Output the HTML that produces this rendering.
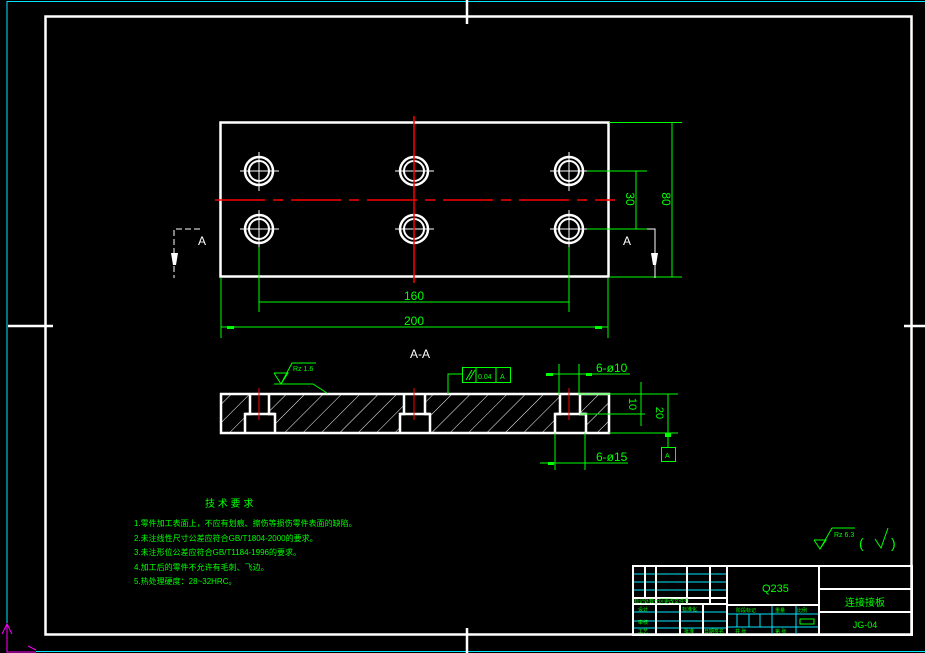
<!DOCTYPE html>
<html><head><meta charset="utf-8"><style>
html,body{margin:0;padding:0;background:#000;width:925px;height:653px;overflow:hidden}
svg{display:block}
text{font-family:"Liberation Sans","Noto Sans CJK SC",sans-serif}
</style></head><body>
<svg width="925" height="653" viewBox="0 0 925 653" xmlns="http://www.w3.org/2000/svg">
<defs>
<pattern id="h" patternUnits="userSpaceOnUse" width="13" height="13" patternTransform="rotate(45)">
<line x1="0" y1="0" x2="0" y2="13" stroke="#fff" stroke-width="1"/>
</pattern>
</defs>
<!-- outer cyan -->
<polyline points="7,623 7,1.5 925,1.5" fill="none" stroke="#00e5ff" stroke-width="1"/>
<line x1="36" y1="651.5" x2="925" y2="651.5" stroke="#00e5ff" stroke-width="1"/>
<!-- magenta UCS -->
<g stroke="#ff00ff" fill="none" stroke-width="1">
<polyline points="7,624 7,652 36,652"/><polyline points="2,634 7,624 12,634"/><polyline points="28,646 36,650"/>
</g>
<!-- inner frame -->
<rect x="45.5" y="16.5" width="866" height="618" fill="none" stroke="#fff" stroke-width="2.5"/>
<g stroke="#fff" stroke-width="2.5">
<line x1="467" y1="0" x2="467" y2="24"/><line x1="467" y1="628" x2="467" y2="653"/>
<line x1="8" y1="326" x2="53" y2="326"/><line x1="904" y1="326" x2="925" y2="326"/>
</g>
<!-- top view -->
<rect x="220.5" y="122.5" width="388" height="154" fill="none" stroke="#fff" stroke-width="2.5"/>
<g stroke="#fff" fill="none">
<g id="hl">
<circle cx="259" cy="171" r="14" stroke-width="2.5"/><circle cx="259" cy="171" r="10" stroke-width="2"/>
<line x1="240" y1="171" x2="279" y2="171" stroke-width="1"/><line x1="259" y1="152" x2="259" y2="191" stroke-width="1"/>
</g>
<use href="#hl" x="155"/><use href="#hl" x="310"/>
<use href="#hl" y="58"/><use href="#hl" x="155" y="58"/><use href="#hl" x="310" y="58"/>
</g>
<line x1="215" y1="200" x2="615" y2="200" stroke="#f00" stroke-width="1.5" stroke-dasharray="50,8,10,8"/>
<line x1="414" y1="116" x2="414" y2="283" stroke="#f00" stroke-width="1.5"/>
<!-- dims top -->
<g stroke="#00ff00" stroke-width="1" fill="none">
<line x1="259" y1="247" x2="259" y2="312"/><line x1="569" y1="247" x2="569" y2="312"/>
<line x1="259" y1="302" x2="569" y2="302"/>
<line x1="221" y1="278" x2="221" y2="338"/><line x1="608" y1="278" x2="608" y2="338"/>
<line x1="221" y1="327" x2="608" y2="327"/>
<line x1="609" y1="122.5" x2="682" y2="122.5"/><line x1="609" y1="277" x2="682" y2="277"/>
<line x1="672" y1="122" x2="672" y2="277"/>
<line x1="587" y1="171" x2="647" y2="171"/><line x1="587" y1="229" x2="647" y2="229"/>
<line x1="636" y1="171" x2="636" y2="229"/>
</g>
<g fill="#00ff00"><rect x="227" y="326" width="7" height="3"/><rect x="595" y="326" width="7" height="3"/></g>
<g fill="#00ff00" font-size="12" text-anchor="middle">
<text x="414" y="300">160</text><text x="414" y="325">200</text>
<text transform="translate(626,199) rotate(90)">30</text>
<text transform="translate(662,199) rotate(90)">80</text>
</g>
<!-- section arrows -->
<g stroke="#fff" stroke-width="1" fill="none">
<polyline points="200,229 174,229 174,278" stroke-dasharray="6,3"/>
<polyline points="647,229 655,229 655,278"/>
</g>
<g fill="#fff"><polygon points="171,253 178,253 176,265 173,265"/><polygon points="651,253 658,253 656,265 653,265"/></g>
<g fill="#fff" font-size="12" text-anchor="middle"><text x="202" y="245">A</text><text x="627" y="245">A</text>
<text x="420" y="358">A-A</text></g>
<!-- section -->
<path d="M221,394 H609 V433 H221 Z M250,394 V414 H245 V433 H275 V414 H269 V394 Z M404,394 V414 H400 V433 H430 V414 H425 V394 Z M560,394 V414 H555 V433 H586 V414 H580 V394 Z" fill="url(#h)" fill-rule="evenodd"/>
<path d="M221,394 H609 V433 H221 Z" fill="none" stroke="#fff" stroke-width="2.5"/>
<g fill="none" stroke="#fff" stroke-width="2.5">
<path d="M250,394 V414 H245 V433 M275,433 V414 H269 V394"/>
<path d="M404,394 V414 H400 V433 M430,433 V414 H425 V394"/>
<path d="M560,394 V414 H555 V433 M586,433 V414 H580 V394"/>
<line x1="245" y1="414" x2="275" y2="414"/><line x1="400" y1="414" x2="430" y2="414"/><line x1="555" y1="414" x2="586" y2="414"/>
</g>
<g stroke="#f00" stroke-width="1"><line x1="259" y1="388" x2="259" y2="420"/><line x1="414" y1="388" x2="414" y2="420"/><line x1="569" y1="388" x2="569" y2="420"/></g>
<!-- section annotations -->
<g stroke="#00ff00" stroke-width="1" fill="none">
<polyline points="274,373 288,373 281,384 274,373"/><polyline points="281,384 292,363 316,363"/>
<polyline points="274,384 313,384 327,393"/>
<rect x="462.5" y="367.5" width="48" height="15"/><line x1="476" y1="367" x2="476" y2="382"/><line x1="496" y1="367" x2="496" y2="382"/>
<polyline points="462,374 448,374 448,394"/>
<line x1="466" y1="380" x2="472" y2="370"/><line x1="469" y1="380" x2="475" y2="370"/>
<line x1="546" y1="374" x2="630" y2="374"/><line x1="559" y1="364" x2="559" y2="395"/><line x1="579" y1="364" x2="579" y2="395"/>
<line x1="580" y1="394" x2="678" y2="394"/><line x1="580" y1="414" x2="645" y2="414"/><line x1="609" y1="433" x2="678" y2="433"/>
<line x1="641" y1="382" x2="641" y2="426"/><line x1="668" y1="394" x2="668" y2="447"/>
<line x1="540" y1="463" x2="628" y2="463"/><line x1="555" y1="433" x2="555" y2="470"/><line x1="585" y1="433" x2="585" y2="470"/>
<rect x="661.5" y="447.5" width="14" height="14"/>
</g>
<g fill="#00ff00"><rect x="546" y="373" width="7" height="3"/><rect x="586" y="373" width="6" height="3"/><rect x="665" y="433" width="6" height="4"/><rect x="548" y="462" width="6" height="3"/></g>
<g fill="#00ff00">
<text x="293" y="371" font-size="7">Rz 1.6</text>
<text x="478" y="379" font-size="7">0.04</text><text x="500" y="379" font-size="7">A</text>
<text x="596" y="372" font-size="12">6-ø10</text><text x="596" y="461" font-size="12">6-ø15</text>
<text x="665" y="458" font-size="7">A</text>
<text transform="translate(629,404) rotate(90)" font-size="11" text-anchor="middle">10</text>
<text transform="translate(656,413) rotate(90)" font-size="11" text-anchor="middle">20</text>
</g>
<!-- technical requirements -->
<g fill="#00ff00" font-size="8">
<text x="205" y="507" font-size="10">技 术 要 求</text>
<text x="134" y="526">1.零件加工表面上，不应有划痕、擦伤等损伤零件表面的缺陷。</text>
<text x="134" y="541">2.未注线性尺寸公差应符合GB/T1804-2000的要求。</text>
<text x="134" y="555">3.未注形位公差应符合GB/T1184-1996的要求。</text>
<text x="134" y="570">4.加工后的零件不允许有毛刺、飞边。</text>
<text x="134" y="584">5.热处理硬度：28~32HRC。</text>
</g>
<!-- Rz6.3 -->
<g stroke="#00ff00" fill="none" stroke-width="1">
<polyline points="814,540 826,540 820,549 814,540"/><polyline points="820,549 832,528 855,528"/>
<polyline points="875,539 881,548 888,528"/>
</g>
<g fill="#00ff00"><text x="834" y="537" font-size="7">Rz 6.3</text><text x="859" y="548" font-size="14">(</text><text x="891" y="548" font-size="14">)</text></g>
<!-- title block -->
<g stroke="#00e5ff" stroke-width="1">
<line x1="633" y1="574" x2="727" y2="574"/><line x1="633" y1="582" x2="727" y2="582"/><line x1="633" y1="590" x2="727" y2="590"/>
<line x1="633" y1="612" x2="727" y2="612"/><line x1="633" y1="621" x2="727" y2="621"/><line x1="633" y1="628" x2="727" y2="628"/>
<line x1="727" y1="614" x2="819" y2="614"/><line x1="727" y1="627" x2="819" y2="627"/>
<line x1="772" y1="605" x2="772" y2="635"/><line x1="737" y1="614" x2="737" y2="627"/><line x1="749" y1="614" x2="749" y2="627"/><line x1="760" y1="614" x2="760" y2="627"/>
<line x1="796" y1="605" x2="796" y2="635"/>
</g>
<g stroke="#fff" stroke-width="2" fill="none">
<rect x="633" y="566" width="279" height="69"/>
<line x1="727" y1="566" x2="727" y2="635"/><line x1="819" y1="566" x2="819" y2="635"/>
<line x1="727" y1="605" x2="819" y2="605"/>
<line x1="819" y1="589" x2="912" y2="589"/><line x1="819" y1="612" x2="912" y2="612"/>
<line x1="633" y1="598" x2="727" y2="598"/><line x1="633" y1="604" x2="727" y2="604"/>
<line x1="645" y1="566" x2="645" y2="598"/><line x1="656" y1="566" x2="656" y2="604"/><line x1="687" y1="566" x2="687" y2="604"/><line x1="710" y1="566" x2="710" y2="604"/>
<line x1="656" y1="604" x2="656" y2="635"/><line x1="680" y1="604" x2="680" y2="635"/><line x1="703" y1="604" x2="703" y2="635"/>
</g>
<rect x="800" y="619" width="14" height="5" fill="none" stroke="#00ff00" stroke-width="1"/>
<g fill="#00ff00">
<text x="762" y="592" font-size="11">Q235</text>
<text x="865" y="606" font-size="10" text-anchor="middle">连接接板</text>
<text x="865" y="628" font-size="9" text-anchor="middle">JG-04</text>
<g font-size="5">
<text x="634" y="603">标记处数分区更改文件号</text>
<text x="638" y="611">设计</text><text x="682" y="611">标准化</text>
<text x="638" y="624">审核</text><text x="638" y="633">工艺</text><text x="684" y="633">批准</text><text x="704" y="633">日期签名</text>
<text x="736" y="612">阶段标记</text><text x="775" y="612">重量</text><text x="797" y="612">比例</text>
<text x="735" y="633">共 张</text><text x="775" y="633">第 张</text>
</g>
</g>
</svg>
</body></html>
